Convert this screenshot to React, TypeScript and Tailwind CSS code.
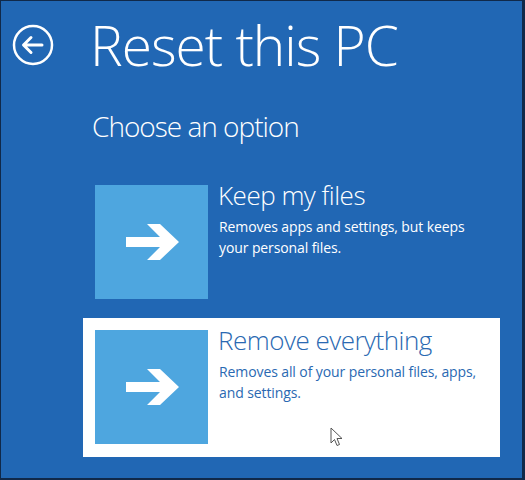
import React from "react";

type Option = {
    title: string;
    lines: string[];
    selected: boolean;
};

const options: Option[] = [
    { title: "Keep my files", lines: ["Removes apps and settings, but keeps", "your personal files."], selected: false },
    { title: "Remove everything", lines: ["Removes all of your personal files, apps,", "and settings."], selected: true },
];

function ArrowTile() {
    return (
        <div className="w-[113px] h-[114px] bg-[#4ea6df] flex items-center justify-center shrink-0">
            <svg width="58" height="44" viewBox="0 0 58 44" className="ml-[2px]">
                <path d="M2 17 H36 L23 4 H36 L55 22 L36 40 H23 L36 27 H2 Z" fill="#ffffff" />
            </svg>
        </div>
    );
}

function OptionCard({ option }: { option: Option }) {
    return (
        <div className={`relative w-[417px] h-[139px] p-[12px] flex gap-[10px] ${option.selected ? "bg-white" : ""}`}>
            <ArrowTile />
            <div className={option.selected ? "text-[#2a69b2]" : "text-white"}>
                <p className="text-[26px] font-light leading-[30px] -mt-[5px] tracking-[-0.5px]">{option.title}</p>
                <div className="mt-[6px] text-[14px] leading-[21px] pl-[1px] tracking-[-0.1px]">
                    {option.lines.map((l) => (
                        <p key={l}>{l}</p>
                    ))}
                </div>
            </div>
            {option.selected && (
                <svg width="14" height="20" viewBox="0 0 14 20" className="absolute left-[247px] top-[109px]">
                    <path d="M1 1 V16 L4.5 12.5 L7 18.5 L9.5 17.5 L7 11.5 H12 Z" fill="#ffffff" stroke="#555" strokeWidth="1" strokeLinejoin="round" />
                </svg>
            )}
        </div>
    );
}

export default function App() {
    return (
        <div className="w-[525px] h-[480px] bg-[#10294a] pt-[1px] pl-[1px] pr-[3px] pb-[2px]" style={{ fontFamily: "'Open Sans', 'Noto Sans', sans-serif" }}>
            <div className="w-full h-full bg-[#2167b4] flex flex-col">
                <div className="flex items-start pt-[12px] pl-[11px]">
                    <svg width="42" height="42" viewBox="0 0 42 42" className="mt-[11px] shrink-0">
                        <circle cx="21" cy="21" r="19" fill="none" stroke="#ffffff" strokeWidth="2.5" />
                        <path d="M30 21 H12 M19 13.5 L11.5 21 L19 28.5" fill="none" stroke="#ffffff" strokeWidth="3" strokeLinecap="round" strokeLinejoin="round" />
                    </svg>
                    <h1 className="ml-[36px] text-[55px] font-light leading-[64px] text-white tracking-[-1px]">Reset this PC</h1>
                </div>
                <p className="ml-[91px] mt-[31px] text-[28px] font-light leading-[36px] text-white tracking-[-1px]">Choose an option</p>
                <div className="ml-[82px] mt-[29px] flex flex-col gap-[6px]">
                    {options.map((o) => (
                        <OptionCard key={o.title} option={o} />
                    ))}
                </div>
            </div>
        </div>
    );
}
